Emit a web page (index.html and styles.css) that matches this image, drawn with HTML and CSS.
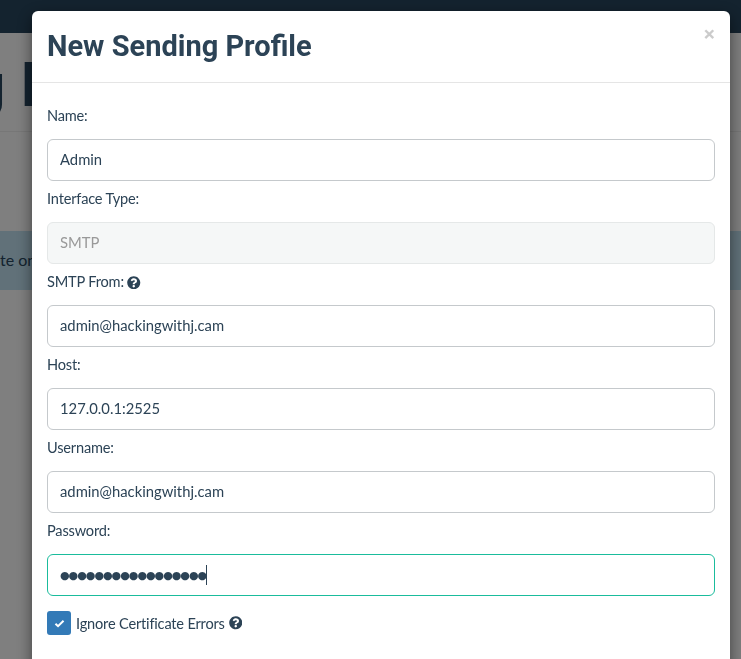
FILE: index.html
```html
<!DOCTYPE html>
<html lang="en">
<head>
<meta charset="utf-8">
<title>New Sending Profile</title>
<link rel="stylesheet" href="styles.css">
</head>
<body>
<div class="page">
  <div class="navbar"></div>
  <div class="page-head"><span class="page-title">g P</span></div>
  <div class="page-gap"></div>
  <div class="alert">te on</div>
</div>
<div class="backdrop"></div>
<div class="modal">
  <div class="modal-header">
    <h4 class="modal-title">New Sending Profile</h4>
    <span class="close">×</span>
  </div>
  <div class="modal-body">
    <label class="lbl">Name:</label>
    <input class="ctl" type="text" value="Admin">
    <label class="lbl">Interface Type:</label>
    <input class="ctl" type="text" value="SMTP" disabled>
    <label class="lbl">SMTP From: <svg class="help" viewBox="0 0 512 512"><path d="M504 256c0 137-111 248-248 248S8 393 8 256 119 8 256 8s248 111 248 248zM263 90c-55 0-89 23-116 64-4 5-3 12 2 16l35 26c5 4 13 3 17-2 18-23 30-36 57-36 20 0 45 13 45 33 0 15-12 22-32 33-23 13-54 30-54 71v4c0 7 5 12 12 12h56c7 0 12-5 12-12v-1c0-29 84-30 84-108 0-58-61-100-118-100zm-7 250c-26 0-46 21-46 46s20 46 46 46 46-21 46-46-20-46-46-46z"/></svg></label>
    <input class="ctl" type="text" value="admin@hackingwithj.cam">
    <label class="lbl">Host:</label>
    <input class="ctl" type="text" value="127.0.0.1:2525">
    <label class="lbl">Username:</label>
    <input class="ctl" type="text" value="admin@hackingwithj.cam">
    <label class="lbl">Password:</label>
    <div class="ctl focus"><span class="dots">●●●●●●●●●●●●●●●●●</span><span class="caret"></span></div>
    <div class="check-row">
      <span class="box"><svg viewBox="0 0 12 10"><path d="M1.5 5.2 4.4 8 10.5 2" fill="none" stroke="#fff" stroke-width="2.2"/></svg></span>
      <span class="check-label">Ignore Certificate Errors</span>
      <svg class="help" viewBox="0 0 512 512"><path d="M504 256c0 137-111 248-248 248S8 393 8 256 119 8 256 8s248 111 248 248zM263 90c-55 0-89 23-116 64-4 5-3 12 2 16l35 26c5 4 13 3 17-2 18-23 30-36 57-36 20 0 45 13 45 33 0 15-12 22-32 33-23 13-54 30-54 71v4c0 7 5 12 12 12h56c7 0 12-5 12-12v-1c0-29 84-30 84-108 0-58-61-100-118-100zm-7 250c-26 0-46 21-46 46s20 46 46 46 46-21 46-46-20-46-46-46z"/></svg>
    </div>
  </div>
</div>
</body>
</html>
```
FILE: styles.css
```css
* { box-sizing: border-box; }
html, body { margin: 0; height: 100%; overflow: hidden; }
body { background: #fff; font-family: Lato, sans-serif; color: #2c4356; }
.page { height: 659px; overflow: hidden; }
.navbar { height: 33px; background: #28465e; }
.page-head { height: 99px; border-bottom: 1px solid #eee; padding-top: 15px; white-space: nowrap; margin-left: -30px; overflow: hidden; }
.page-title { font: 700 62px/74px Roboto, sans-serif; color: #28465e; }
.page-gap { height: 99px; }
.alert { height: 59px; background: #c2e3f3; line-height: 58px; font-size: 16px; color: #28465e; }
.backdrop { position: fixed; inset: 0; background: rgba(0,0,0,.5); }
.modal { position: fixed; left: 32px; top: 11px; width: 698px; height: 700px; background: #fff; border-radius: 6px; box-shadow: 0 5px 15px rgba(0,0,0,.5); }
.modal-header { position: relative; height: 72px; border-bottom: 1px solid #e5e5e5; padding: 15px; }
.modal-title { margin: 0; font: 700 29px/40px Roboto, sans-serif; color: #2c4356; }
.close { position: absolute; right: 15px; top: 10px; font: 700 21px/26px Roboto, sans-serif; color: #000; opacity: .2; }
.modal-body { padding: 23px 15px 15px; display: flex; flex-direction: column; }
.lbl { display: block; font-size: 14.6px; letter-spacing: -.19px; line-height: 20px; height: 20px; margin-bottom: 13px; white-space: nowrap; }
.ctl { display: flex; align-items: center; width: 100%; height: 42px; padding: 0 12px 2px; border: 1px solid #c5c9cc; border-radius: 6px; background: #fff; font: 14.8px Lato, sans-serif; color: #2c4356; margin-bottom: 8px; outline: none; }
.ctl:disabled { background: #f5f7f7; border-color: #e5e8e8; color: #999; }
.focus { border-color: #1abc9c; padding-bottom: 0; }
.dots { font: 11px "DejaVu Sans", sans-serif; letter-spacing: -1px; }
.caret { width: 1px; height: 20px; background: #2c4356; }
.help { width: 13.5px; height: 13.5px; fill: #2c4356; vertical-align: -2px; }
.check-row { display: flex; align-items: center; margin-top: 7px; gap: 5px; }
.box { width: 24px; height: 24px; border-radius: 3px; background: #337ab7; display: flex; align-items: center; justify-content: center; }
.box svg { width: 11px; height: 9px; }
.check-label { font-size: 14.6px; letter-spacing: -.19px; margin-right: -1px; }
```
